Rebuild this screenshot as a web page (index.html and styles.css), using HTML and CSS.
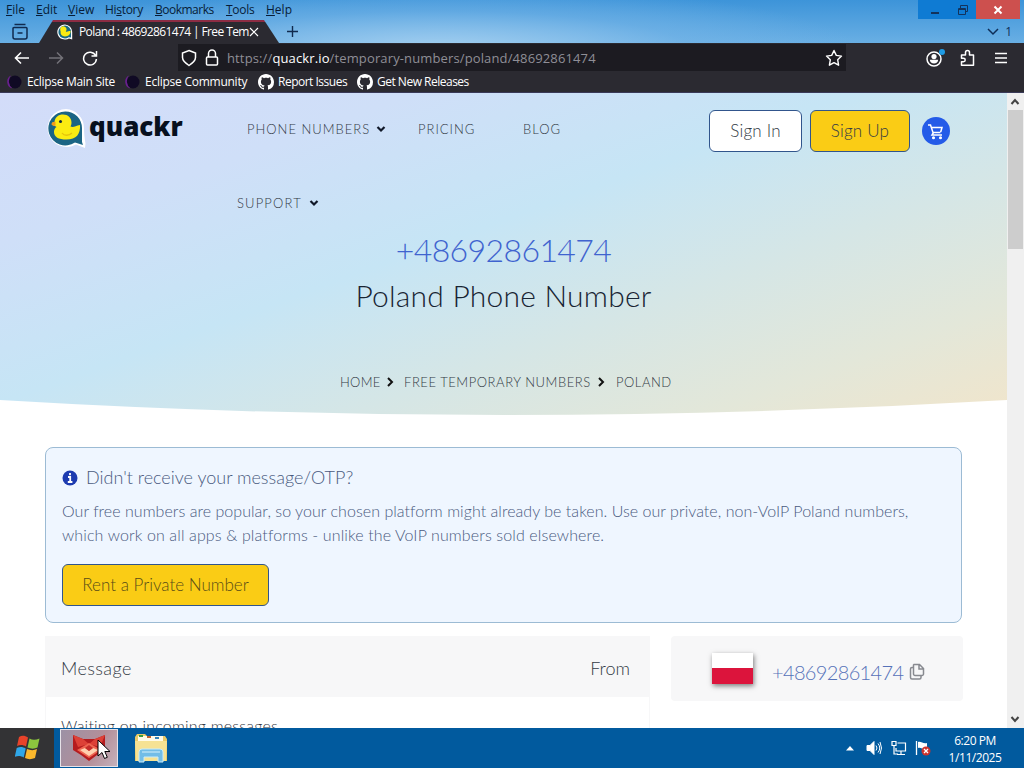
FILE: index.html
```html
<!DOCTYPE html>
<html lang="en">
<head>
  <meta charset="UTF-8" />
  <title>Poland : 48692861474 | Free Temporary Numbers</title>
  <link rel="stylesheet" href="styles.css">
</head>
<body>
  <div class="chrome">
    <div class="titlebar">
      <div class="menubar">
        <span class="m-file"><u>F</u>ile</span>
        <span class="m-edit"><u>E</u>dit</span>
        <span class="m-view"><u>V</u>iew</span>
        <span class="m-history">Hi<u>s</u>tory</span>
        <span class="m-bookmarks"><u>B</u>ookmarks</span>
        <span class="m-tools"><u>T</u>ools</span>
        <span class="m-help"><u>H</u>elp</span>
      </div>
      <div class="win-controls">
        <span class="win-min"><svg width="10" height="10"><path d="M1 8h8" stroke="#13335c" stroke-width="2"/></svg></span>
        <span class="win-max"><svg width="12" height="12" fill="none" stroke="#13335c"><path d="M1.5 4.500h7v6h-7zM3.500 4V1.500h7v6H9M2 5.500h6"/></svg></span>
        <span class="win-close"><svg width="10" height="10"><path d="M1.500 1.500l7 7M8.500 1.500l-7 7" stroke="#fff" stroke-width="2"/></svg></span>
      </div>
    </div>

    <div class="tabs">
      <svg class="history-icon" width="18" height="18" fill="none" stroke="#102a4e" stroke-width="1.500"><path d="M3.500 1.500h11M2 5.500a1 1 0 0 1 1-1h12a1 1 0 0 1 1 1V14a2 2 0 0 1-2 2H4a2 2 0 0 1-2-2zM6.500 10h5"/></svg>
      <div class="tab">
        <svg width="16" height="16" viewBox="0 0 40 40"><path d="M20 1a19 19 0 0 1 18 19v19l-8-3A19 19 0 1 1 20 1z" fill="#fff"/><path d="M20 4a16 16 0 0 1 15 16v14l-6-1A16 16 0 1 1 20 4z" fill="#1b6b86"/><path d="M8 15a8 8 0 1 1 14 4c4 2 7-2 12-2 0 9-5 14-14 14-8 0-12-4-11-12z" fill="#fbea12"/></svg>
        <span class="tab-title">Poland : 48692861474 | Free Tem</span>
        <svg class="tab-close" width="10" height="10"><path d="M1 1l8 8M9 1l-8 8" stroke="#fff" stroke-width="1.200"/></svg>
      </div>
      <svg class="new-tab" width="13" height="13"><path d="M6.500 1v11M1 6.500h11" stroke="#102a4e" stroke-width="1.400"/></svg>
      <div class="tab-count">
        <svg width="12" height="8" fill="none" stroke="#0e2d57" stroke-width="1.500"><path d="M1 1l5 5 5-5"/></svg>
        <span>1</span>
      </div>
    </div>

    <div class="toolbar">
      <svg class="back" width="16" height="14" fill="none" stroke="#fff" stroke-width="1.600"><path d="M7 1.500L1.500 7 7 12.500M1.500 7H15"/></svg>
      <svg class="forward" width="16" height="14" fill="none" stroke="#737278" stroke-width="1.500"><path d="M9 1.500L14.500 7 9 12.500M14.500 7H1"/></svg>
      <svg class="reload" width="16" height="16" fill="none" stroke="#fff" stroke-width="1.500"><path d="M13.600 5.500A6.400 6.400 0 1 0 14.400 9M14.500 1v5h-5"/></svg>
      <div class="urlbar">
        <svg width="16" height="18" fill="none" stroke="#fff" stroke-width="1.500"><path d="M8 1.500L14.500 4v4.500C14.500 12 11 14.500 8 16.500 5 14.500 1.500 12 1.500 8.500V4z"/></svg>
        <svg class="lock" width="14" height="18" fill="none" stroke="#fff" stroke-width="1.500"><path d="M3.500 8V4.500a3.500 3.500 0 0 1 7 0V8"/><rect x="1.500" y="8" width="11" height="8" rx="1"/></svg>
        <span class="url">https://<b>quackr.io</b>/temporary-numbers/poland/48692861474</span>
        <svg class="star" width="18" height="18" fill="none" stroke="#fff" stroke-width="1.400" stroke-linejoin="round"><path d="M9 1.500l2.300 4.900 5.200.7-3.800 3.700.9 5.400L9 13.600l-4.600 2.600.9-5.400-3.800-3.700 5.200-.7z"/></svg>
      </div>
      <div class="tools">
        <svg width="20" height="20" fill="none" stroke="#fff" stroke-width="1.500"><circle cx="9" cy="11" r="7"/><circle cx="9" cy="8.600" r="2.600" fill="#fff" stroke="none"/><path d="M4.800 11.800h8.400c0 2.400-2 3.700-4.200 3.700s-4.200-1.300-4.200-3.700z" fill="#fff" stroke="none"/><circle cx="17" cy="4" r="3" fill="#1e9be4" stroke="none"/></svg>
        <svg width="16" height="18" fill="none" stroke="#fff" stroke-width="1.500" stroke-linejoin="round"><path d="M1.500 6h4V3.500a2 2 0 0 1 4 0V6h4v10.200h-12v-3.500H3.500a1.700 1.700 0 0 0 0-3.400h-2z"/></svg>
        <svg width="14" height="12" stroke="#fff" stroke-width="1.400"><path d="M1 1.500h12M1 6h12M1 10.500h12"/></svg>
      </div>
    </div>

    <div class="bookmarks">
      <svg width="16" height="16"><circle cx="9" cy="8" r="6.500" fill="#100a24"/><path d="M5 1.500A7 7 0 0 0 6.500 14.500 9 9 0 0 1 5 1.500z" fill="#6a1f90"/></svg>
      <span class="bm-main">Eclipse Main Site</span>
      <svg width="16" height="16"><circle cx="9" cy="8" r="6.500" fill="#100a24"/><path d="M5 1.500A7 7 0 0 0 6.500 14.500 9 9 0 0 1 5 1.500z" fill="#6a1f90"/></svg>
      <span class="bm-community">Eclipse Community</span>
      <svg width="16" height="16" viewBox="0 0 16 16" fill="#fff"><path d="M8 0C3.580 0 0 3.580 0 8c0 3.540 2.290 6.530 5.470 7.590.4.070.55-.17.55-.38 0-.19-.01-.82-.01-1.490-2.010.37-2.530-.49-2.690-.94-.09-.23-.48-.94-.82-1.130-.28-.15-.68-.52-.01-.53.63-.01 1.080.58 1.230.82.72 1.210 1.870.87 2.330.66.07-.52.28-.87.51-1.070-1.780-.2-3.640-.89-3.640-3.950 0-.87.31-1.590.82-2.150-.08-.2-.36-1.020.08-2.120 0 0 .67-.21 2.200.82.64-.18 1.320-.27 2-.27s1.360.09 2 .27c1.530-1.040 2.200-.82 2.200-.82.44 1.100.16 1.920.08 2.120.51.56.82 1.270.82 2.150 0 3.070-1.870 3.750-3.650 3.950.29.25.54.73.54 1.480 0 1.070-.01 1.930-.01 2.200 0 .21.15.46.55.38A8.010 8.010 0 0 0 16 8c0-4.420-3.580-8-8-8z"/></svg>
      <span class="bm-issues">Report Issues</span>
      <svg width="16" height="16" viewBox="0 0 16 16" fill="#fff"><path d="M8 0C3.580 0 0 3.580 0 8c0 3.540 2.290 6.530 5.470 7.590.4.070.55-.17.55-.38 0-.19-.01-.82-.01-1.490-2.010.37-2.530-.49-2.690-.94-.09-.23-.48-.94-.82-1.130-.28-.15-.68-.52-.01-.53.63-.01 1.080.58 1.230.82.72 1.210 1.870.87 2.330.66.07-.52.28-.87.51-1.070-1.780-.2-3.640-.89-3.640-3.950 0-.87.31-1.590.82-2.150-.08-.2-.36-1.020.08-2.120 0 0 .67-.21 2.200.82.64-.18 1.320-.27 2-.27s1.360.09 2 .27c1.530-1.040 2.200-.82 2.200-.82.44 1.100.16 1.920.08 2.120.51.56.82 1.270.82 2.150 0 3.070-1.870 3.750-3.650 3.950.29.25.54.73.54 1.480 0 1.070-.01 1.930-.01 2.200 0 .21.15.46.55.38A8.010 8.010 0 0 0 16 8c0-4.420-3.580-8-8-8z"/></svg>
      <span class="bm-releases">Get New Releases</span>
    </div>
  </div>

  <div class="viewport">
    <div class="page">
      <div class="hero">
        <div class="navbar">
          <div class="brand">
            <svg width="41" height="42" viewBox="0 0 41 42"><path d="M20 1a19 19 0 0 1 18 19c0 5 .5 10 1.500 15.500L39 40l-9-3.500A19 19 0 1 1 20 1z" fill="#fff"/><path d="M19.500 3.500A16.500 16.500 0 0 1 36 20v14l1 3-8-2.500a17 17 0 1 1-9.500-31z" fill="#1b6584"/><path d="M9 18c-4-1-4-4-.5-4C9 9 12.500 6.500 17 6.500c5 0 8.500 3.500 8.500 8 0 2-.5 3-1 4 3 1.500 5-1 9.500-1.500 .5 9-3.500 14.500-13.500 14.500C12.500 31.500 8 29 8 24c0-2.500 1-4 2.500-5z" fill="#fbec12"/><path d="M16 25c2 3 7 3 10 0" fill="none" stroke="#e5c40c" stroke-width="1.300"/><path d="M5.500 16.500c0-2 2-3 4-2.500v3.500c-1.500.5-3 .3-4-1z" fill="#f39a1d"/><circle cx="14.500" cy="13.500" r="1.500" fill="#152a3a"/></svg>
            <span>quackr</span>
          </div>
          <div class="nav-links">
            <div class="nav-row">
              <a class="nav-phone">PHONE NUMBERS</a>
              <svg class="caret" width="10" height="7" fill="none" stroke="#101828" stroke-width="2.200"><path d="M1.500 1l3.500 3.500L8.500 1"/></svg>
              <a class="nav-pricing">PRICING</a>
              <a class="nav-blog">BLOG</a>
            </div>
            <div class="nav-row second">
              <a class="nav-support">SUPPORT</a>
              <svg class="caret" width="10" height="7" fill="none" stroke="#101828" stroke-width="2.200"><path d="M1.500 1l3.500 3.500L8.500 1"/></svg>
            </div>
          </div>
          <div class="actions">
            <a class="btn white sign-in"><span>Sign In</span></a>
            <a class="btn yellow sign-up"><span>Sign Up</span></a>
            <a class="cart"><svg width="18" height="18" fill="none" stroke="#fff" stroke-width="1.500"><path d="M1 3h2.500l2.500 7.500h7.500M4.500 5.500H15L13.700 10M6.500 10.500L5 13h10"/><circle cx="6.500" cy="15.800" r=".8"/><circle cx="13.500" cy="15.800" r=".8"/></svg></a>
          </div>
        </div>
        <h1 class="number">+48692861474</h1>
        <h2 class="country">Poland Phone Number</h2>
        <div class="crumbs">
          <a class="c-home">HOME</a>
          <svg width="7" height="10" fill="none" stroke="#111" stroke-width="2"><path d="M1 1l4 4-4 4"/></svg>
          <a class="c-free">FREE TEMPORARY NUMBERS</a>
          <svg width="7" height="10" fill="none" stroke="#111" stroke-width="2"><path d="M1 1l4 4-4 4"/></svg>
          <a class="c-poland">POLAND</a>
        </div>
      </div>

      <div class="notice">
        <div class="notice-title">
          <svg width="16" height="16"><circle cx="8" cy="8" r="7.500" fill="#1d3bb0"/><path d="M8 3v2.300M6 7h2.200v5M5.800 12h4.600" stroke="#fff" stroke-width="1.800" fill="none"/></svg>
          <span>Didn't receive your message/OTP?</span>
        </div>
        <p class="line-one">Our free numbers are popular, so your chosen platform might already be taken. Use our private, non-VoIP Poland numbers,</p>
        <p class="line-two">which work on all apps &amp; platforms - unlike the VoIP numbers sold elsewhere.</p>
        <a class="btn yellow rent"><span>Rent a Private Number</span></a>
      </div>

      <div class="columns">
        <div class="messages">
          <div class="messages-head"><span class="th-message">Message</span><span class="th-from">From</span></div>
          <div class="messages-row"><span>Waiting on incoming messages</span></div>
        </div>
        <div class="number-card">
          <div class="flag"></div>
          <span>+48692861474</span>
          <svg width="16" height="18" fill="none" stroke="#888a90" stroke-width="1.500"><path d="M5 1.500h5.500L14.500 5.500V11a1.500 1.500 0 0 1-1.500 1.500H6A1.500 1.500 0 0 1 4.500 11V2zM10 1.500V6h4.500M4 4.500H3A1.500 1.500 0 0 0 1.500 6v8.500A1.500 1.500 0 0 0 3 16h7.500A1.500 1.500 0 0 0 12 14.500V13"/></svg>
        </div>
      </div>
    </div>
    <div class="scrollbar">
      <svg width="17" height="17" fill="none" stroke="#444" stroke-width="2"><path d="M4.500 11l3.500-4 3.500 4"/></svg>
      <div class="thumb"></div>
      <svg class="down" width="17" height="17" fill="none" stroke="#444" stroke-width="2"><path d="M4.500 6L8 10l3.500-4"/></svg>
    </div>
  </div>

  <div class="taskbar">
    <div class="start">
      <svg width="28" height="26" viewBox="0 0 28 26"><path d="M4 2c3-2 6-1.500 9 .5l-2 9c-3-2-6-2-9-.5z" fill="#e8432a"/><path d="M14.500 3.500c3 1.700 6 1.700 10 0l-2 9c-3 1.500-6.500 1.500-10 0z" fill="#8cc63e"/><path d="M1.700 13c3-1.500 6-1.500 9 .5l-2 9c-3-2-6-2-9-.5z" fill="#30a7e8"/><path d="M12 14c3.500 1.500 7 1.500 10 0l-2 9c-3.500 1.500-7 1.500-10 0z" fill="#fbb82c"/></svg>
    </div>
    <div class="task active">
      <svg width="36" height="28" viewBox="0 0 36 28"><path d="M2 1l10 4h12l10-4v15l-8 5-8 6-8-6-8-5z" fill="#b51c1f"/><path d="M2 1l10 4 6 5 6-5 10-4-5 12-11-3-11 3z" fill="#dd4137"/><path d="M6 16l12-7 12 7-12 8z" fill="#ef6550"/><path d="M9 16l5-2 4 3 4-3 5 2-9 6z" fill="#ffd0ae"/><path d="M14 14l4-3 4 3-4 3z" fill="#c52d2b"/></svg>
      <svg class="cursor" width="14" height="21"><path d="M1 1v16l4-3.500 2.500 6 2.800-1.200L7.800 12.500H13z" fill="#fff" stroke="#000"/></svg>
    </div>
    <div class="task folder">
      <svg width="34" height="30" viewBox="0 0 34 30"><path d="M1 4l2-3h8l2 2h18l2 3v22H1z" fill="#e9c968"/><path d="M4 3h25v6H4z" fill="#fffbe8"/><path d="M5 2h4v2H5z" fill="#3c9b3c"/><path d="M13 3h4v2h-4z" fill="#c0632e"/><path d="M21 4h4v2h-4z" fill="#3683b8"/><path d="M1 8h32l-1 20H2z" fill="#f6e293"/><path d="M5 29V19q0-3 3-3h18q3 0 3 3v10h-5v-5H10v5z" fill="#72bde7" stroke="#c9ecfa"/><path d="M8 19h18" stroke="#d6f1fb"/></svg>
    </div>
    <div class="tray">
      <svg width="8" height="5"><path d="M0 4.500L4 0l4 4.500z" fill="#fff"/></svg>
      <svg class="sound" width="16" height="16" fill="none" stroke="#fff"><path d="M1 5.500h3l4-4v13l-4-4H1z" fill="#fff"/><path d="M10 5.500q2 2.500 0 5M12 3.500q3.500 4.500 0 9M14 2q3 6 0 12"/></svg>
      <svg class="network" width="16" height="16" fill="none" stroke="#fff" stroke-width="1.200"><path d="M6.500 3h8v8H5V8M10 11v3M6 14.500h8M1 1.500h4v4H1zM3 5.500V14h4"/></svg>
      <svg class="flag-icon" width="16" height="16"><path d="M1.500 1v14" stroke="#fff" stroke-width="1.300"/><path d="M3 2c3-1 5 2 9 1v6c-4 1-6-2-9-1z" fill="#fff"/><circle cx="11" cy="11" r="4.500" fill="#cd332d"/><path d="M9 9l4 4M13 9l-4 4" stroke="#fff" stroke-width="1.300"/></svg>
      <div class="clock"><span class="time">6:20 PM</span><span class="date">1/11/2025</span></div>
    </div>
  </div>
</body>
</html>
```
FILE: styles.css
```css
* { box-sizing: border-box; }

body {
  margin: 0;
  width: 1024px;
  height: 768px;
  overflow: hidden;
  display: flex;
  flex-direction: column;
  font-family: "Open Sans", "Noto Sans", sans-serif;
  font-size: 12px;
  white-space: nowrap;
}

svg { display: block; flex: none; }

span, a { flex: none; }

/* browser chrome */
.chrome {
  height: 93px;
  flex: none;
  background: radial-gradient(ellipse 420px 65px at 440px 50px, #a5d0f0, rgba(120, 182, 232, 0.5) 60%, transparent), linear-gradient(#3d94d9, #69afe4 43px);
  color: #fff;
}

.titlebar {
  display: flex;
  justify-content: space-between;
  height: 20px;
}

.menubar {
  display: flex;
  padding-left: 6px;
  line-height: 20px;
  color: #071c38;
}

.m-file { width: 30px; }
.m-edit { width: 32px; }
.m-view { width: 37px; }
.m-history { width: 50px; letter-spacing: -0.3px; }
.m-bookmarks { width: 71px; letter-spacing: -0.5px; }
.m-tools { width: 40px; letter-spacing: -0.3px; }

.win-controls {
  display: flex;
  height: 19px;
  margin-right: 4px;
  background: #0f7bd3;
}

.win-controls span {
  display: flex;
  align-items: center;
  justify-content: center;
}

.win-min { width: 34px; }
.win-max { width: 24px; padding-right: 3px; }
.win-close { width: 44px; background: #cd504e; }

.tabs {
  display: flex;
  align-items: center;
  height: 23px;
}

.history-icon { margin-left: 11px; }

.tab {
  display: flex;
  align-items: center;
  width: 240px;
  height: 23px;
  margin-left: 10px;
  padding-left: 18px;
  background: linear-gradient(#8c2c43 2px, #2b2a31 2px);
  clip-path: polygon(14px 0, 225px 0, 240px 100%, 0 100%);
}

.tab-title {
  width: 167px;
  margin-left: 6px;
  letter-spacing: -0.61px;
}

.tab-close { margin-left: 3px; }

.new-tab { margin-left: 7px; }

.tab-count {
  display: flex;
  align-items: center;
  gap: 6px;
  margin-left: auto;
  margin-right: 12px;
  color: #0e2d57;
}

.toolbar {
  display: flex;
  align-items: center;
  height: 29px;
  background: #2b2a31;
}

.back { margin-left: 14px; }
.forward { margin-left: 18px; }
.reload { margin-left: 18px; }

.urlbar {
  display: flex;
  align-items: center;
  width: 668px;
  height: 27px;
  margin-left: 80px;
  padding-left: 3px;
  background: #1c1b21;
}

.lock { margin-left: 8px; }

.url {
  margin-left: 8px;
  font-size: 13px;
  letter-spacing: 0.13px;
  color: #8f8e96;
}

.url b { font-weight: 400; color: #fff; }

.star { margin-left: auto; margin-right: 3px; }

.tools {
  display: flex;
  align-items: center;
  gap: 15px;
  margin-left: 79px;
}

.tools svg:last-child { margin-left: 3px; }

.bookmarks {
  display: flex;
  align-items: center;
  height: 21px;
  padding: 0 0 1px 6px;
  background: #2b2a31;
  border-bottom: 1px solid #3a3a58;
}

.bookmarks span { margin-left: 5px; }
.bm-main { width: 97px; letter-spacing: -0.3px; }
.bm-community { width: 113px; letter-spacing: -0.25px; }
.bookmarks .bm-issues { width: 79px; margin-left: 4px; letter-spacing: -0.5px; }
.bookmarks .bm-releases { margin-left: 4px; letter-spacing: -0.5px; }

/* web page */
.viewport {
  display: flex;
  height: 635px;
  flex: none;
  overflow: hidden;
  background: #fff;
}

.page {
  width: 1007px;
  font-family: Lato, "Open Sans", sans-serif;
  font-weight: 300;
  color: #333a45;
}

.hero {
  height: 323px;
  background: linear-gradient(160deg, #d3dcf9, #cfdff8 22%, #c6e5f5 45%, #d5e6e6 65%, #e3e7d9 84%, #f1e5cb);
  clip-path: path("M0 0H1007V307Q503 337 0 307Z");
}

.navbar { display: flex; height: 135px; }

.brand {
  display: flex;
  align-items: center;
  height: 72px;
  padding-left: 46px;
  width: 237px;
  font-family: "Open Sans", sans-serif;
  font-size: 26px;
  font-weight: 800;
  color: #07101e;
}

.brand span { margin-left: 2px; margin-top: -6px; }

.nav-links { width: 472px; font-size: 13px; }

.nav-row {
  display: flex;
  align-items: center;
  height: 73px;
  padding-left: 10px;
  letter-spacing: 1px;
}

.nav-row a { margin-top: -1px; }

.nav-row.second { padding-left: 0; height: 75px; }

.nav-phone { width: 129px; }
.nav-support { width: 72px; letter-spacing: 1.150px; }
.nav-pricing { margin-left: 32px; width: 105px; }

.actions { display: flex; align-items: center; height: 76px; }

.btn {
  display: flex;
  align-items: center;
  justify-content: center;
  height: 42px;
  padding-bottom: 2px;
  border: 1px solid #31558c;
  border-radius: 6px;
  font-size: 17px;
}

.white { background: #fff; }
.yellow { background: #facc15; }

.sign-in { width: 93px; letter-spacing: 0.2px; }
.sign-up { width: 100px; margin-left: 8px; letter-spacing: 0.2px; }

.cart {
  display: flex;
  align-items: center;
  justify-content: center;
  width: 28px;
  height: 28px;
  margin-left: 12px;
  border-radius: 50%;
  background: #245be8;
}

.number, .country {
  margin: 0;
  text-align: center;
  font-weight: 300;
  font-size: 32px;
  line-height: 44px;
}

.number { color: #3f63cf; letter-spacing: -0.6px; }
.country { color: #182433; font-size: 30px; line-height: 46px; letter-spacing: 0.22px; }

.crumbs {
  display: flex;
  align-items: center;
  margin-top: 55px;
  padding-left: 340px;
  height: 18px;
  font-size: 13px;
}

.c-home { width: 47px; letter-spacing: 0.3px; }
.c-free { margin-left: 10px; width: 194px; letter-spacing: 0.55px; }
.c-poland { margin-left: 11px; letter-spacing: 0.5px; }

.notice {
  width: 917px;
  height: 176px;
  margin: 31px 0 0 45px;
  padding: 18px 16px;
  border: 1px solid #9cbbd4;
  border-radius: 8px;
  background: #eff6ff;
  color: #4a5a80;
  font-size: 16px;
}

.notice-title {
  display: flex;
  align-items: center;
  gap: 8px;
  height: 24px;
  margin-bottom: 9px;
  font-size: 18px;
}

.notice-title span { margin-top: -2px; }

.notice p { margin: 0; line-height: 24px; }

.line-one { letter-spacing: 0.04px; }
.line-two { letter-spacing: 0.12px; }

.rent { width: 207px; margin-top: 17px; color: #594c17; }

.columns { display: flex; margin: 13px 0 0 45px; }

.messages {
  width: 605px;
  height: 150px;
  border: 1px solid #f7f7f8;
  font-size: 18px;
}

.messages-head {
  display: flex;
  align-items: center;
  justify-content: space-between;
  height: 60px;
  padding: 2px 19px 0 15px;
  background: #f7f7f8;
}

.th-message { letter-spacing: 0.4px; }

.messages-row {
  padding: 17px 15px;
  font-size: 16px;
  line-height: 24px;
  letter-spacing: 0.2px;
}

.number-card {
  display: flex;
  align-items: center;
  width: 292px;
  height: 65px;
  margin-left: 21px;
  padding: 6px 0 0 41px;
  background: #f7f7f8;
  border-radius: 4px;
  font-size: 20px;
  color: #5672b9;
}

.flag {
  width: 41px;
  height: 31px;
  margin-top: -6px;
  margin-right: 19px;
  background: linear-gradient(#fff 50%, #dc143c 50%);
  box-shadow: 1px 2px 5px rgba(0, 0, 0, 0.5);
}

.number-card span { width: 137px; letter-spacing: -0.65px; }

.scrollbar {
  display: flex;
  flex-direction: column;
  width: 17px;
  background: #f0f0f0;
}

.thumb { width: 15px; height: 139px; margin-left: 1px; background: #cdcdcd; }
.down { margin-top: auto; }

/* taskbar */
.taskbar {
  display: flex;
  align-items: center;
  height: 40px;
  background: #015a9e;
  color: #fff;
}

.start {
  display: flex;
  align-items: center;
  justify-content: center;
  width: 54px;
  height: 40px;
  background: #333335;
}

.start svg { margin-left: 3px; }

.task { display: flex; align-items: center; justify-content: center; height: 38px; }

.task.active {
  position: relative;
  width: 58px;
  margin-left: 6px;
  border: 1px solid #e6e2e8;
  background: linear-gradient(120deg, #9c91a5, #b48f99 60%, #c4b1bb);
}

.cursor { position: absolute; left: 36px; top: 9px; }

.folder { margin-left: 16px; }

.tray { display: flex; align-items: center; margin-left: auto; }

.sound { margin-left: 12px; }
.network { margin-left: 9px; }
.flag-icon { margin-left: 8px; }

.clock {
  display: flex;
  flex-direction: column;
  align-items: center;
  width: 84px;
  margin-left: 2px;
  margin-right: 7px;
  padding-top: 1px;
  line-height: 17px;
  letter-spacing: -0.45px;
}
```
